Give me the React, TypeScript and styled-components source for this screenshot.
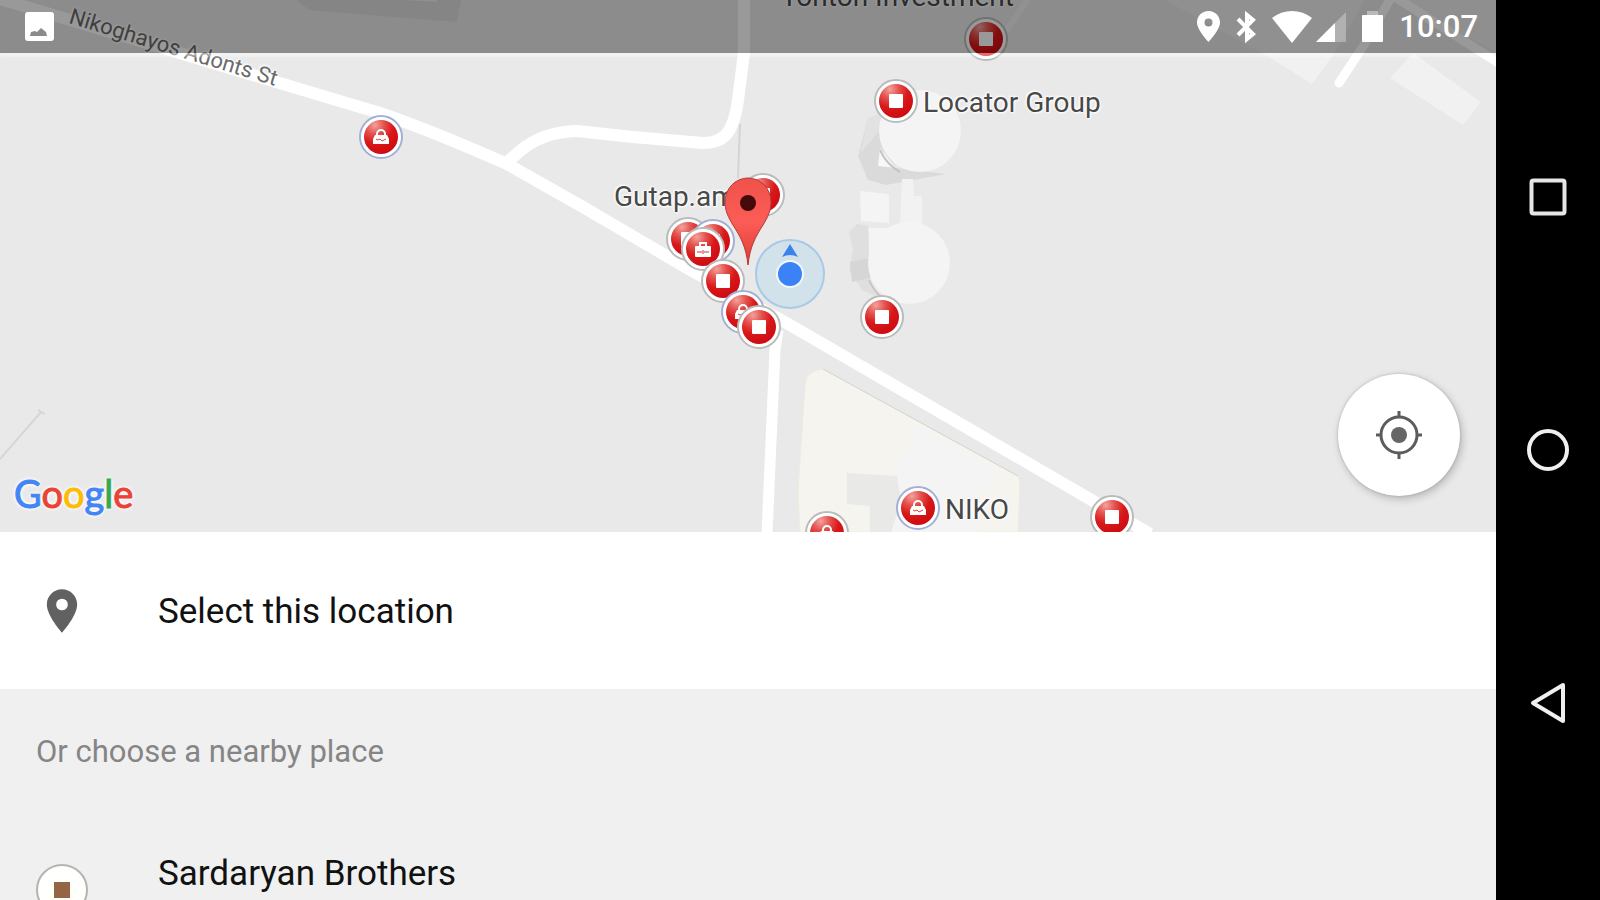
import React from 'react';
import styled, { createGlobalStyle } from 'styled-components';

const GlobalStyle = createGlobalStyle`
  *, *::before, *::after { box-sizing: border-box; }
  body { margin: 0; background: #000; font-family: Roboto, "Liberation Sans", sans-serif; }
  button { font: inherit; color: inherit; background: none; border: 0; padding: 0; cursor: pointer; }
  svg { display: block; }
`;

const Device = styled.div`
  display: flex;
  height: 100vh;
  overflow: hidden;
  background: #000;
`;

const Screen = styled.main`
  position: relative;
  flex: 1;
  min-width: 0;
  display: flex;
  flex-direction: column;
  background: #f0f0f0;
  overflow: hidden;
`;

const NavBar = styled.nav`
  flex: none;
  width: 104px;
  display: flex;
  flex-direction: column;
  align-items: stretch;
  justify-content: center;
`;

const NavButton = styled.button`
  flex: 0 1 253px;
  display: flex;
  align-items: center;
  justify-content: center;
`;

const StatusBar = styled.header`
  position: absolute;
  inset: 0 0 auto 0;
  height: 53px;
  padding: 0 18px 0 25px;
  display: flex;
  align-items: center;
  justify-content: space-between;
  background: rgba(0, 0, 0, 0.4);
  box-shadow: 0 4px 2px rgba(255, 255, 255, 0.4);
  color: #fff;
`;

const StatusGroup = styled.div<{ $gap: number }>`
  display: flex;
  align-items: center;
  gap: ${(p) => p.$gap}px;
`;

const Clock = styled.time`
  font-size: 31px;
  line-height: 36px;
  font-weight: 500;
`;

const MapArea = styled.section`
  position: relative;
  flex: none;
  height: 532px;
  overflow: hidden;
  background: #e9e9e9;
`;

const Terrain = styled.svg`
  position: absolute;
  left: 0;
  top: 0;
`;

const MapLabel = styled.span<{ $x: number; $y: number; $rotate?: number; $size?: number }>`
  position: absolute;
  left: ${(p) => p.$x}px;
  top: ${(p) => p.$y}px;
  font-size: ${(p) => p.$size ?? 28}px;
  line-height: 36px;
  white-space: nowrap;
  color: ${(p) => (p.$rotate ? '#6a6a6a' : '#484848')};
  text-shadow: 0 0 2px #fff, 0 0 3px #fff, 1px 1px 2px #fff, -1px -1px 2px #fff;
  transform-origin: 0 50%;
  transform: rotate(${(p) => p.$rotate ?? 0}deg);
`;

const Pin = styled.svg<{ $x: number; $y: number }>`
  position: absolute;
  left: ${(p) => p.$x}px;
  top: ${(p) => p.$y}px;
  transform: translate(-50%, -50%);
`;

const Wordmark = styled.span`
  position: absolute;
  left: 14px;
  bottom: 15px;
  font-family: Lato, Roboto, sans-serif;
  font-size: 38px;
  line-height: 48px;
  text-shadow: 0 0 3px #fff, 0 0 4px #fff, 0 0 5px #fff;
`;

const Letter = styled.span<{ $color: string }>`
  color: ${(p) => p.$color};
  -webkit-text-stroke: 1px ${(p) => p.$color};
`;

const LocateButton = styled.button`
  position: absolute;
  right: 36px;
  bottom: 36px;
  width: 122px;
  height: 122px;
  border-radius: 50%;
  display: flex;
  align-items: center;
  justify-content: center;
  background: #fff;
  box-shadow: 2px 3px 8px rgba(0, 0, 0, 0.22), 0 0 3px rgba(0, 0, 0, 0.18);
`;

const SelectRow = styled.button`
  flex: none;
  height: 157px;
  padding: 0 36px;
  display: flex;
  align-items: center;
  gap: 70px;
  text-align: left;
  background: #fff;
`;

const RowText = styled.span`
  padding-top: 2px;
  font-size: 35px;
  line-height: 44px;
  color: #111;
`;

const Nearby = styled.section`
  flex: none;
`;

const NearbyTitle = styled.h2`
  margin: 0;
  padding: 0 36px;
  font-size: 31px;
  font-weight: 400;
  line-height: 126px;
  color: #858585;
`;

const PlaceRow = styled.button`
  width: 100%;
  height: 153px;
  padding: 35px 36px 0;
  display: flex;
  align-items: flex-start;
  gap: 70px;
  text-align: left;
`;

const PlaceBadge = styled.span`
  flex: none;
  width: 52px;
  height: 52px;
  margin-top: 14px;
  border: 2px solid #b4b4b0;
  border-radius: 50%;
  display: flex;
  align-items: center;
  justify-content: center;
  background: #fffffd;

  &::before {
    content: '';
    width: 16px;
    height: 16px;
    background: #946545;
  }
`;

type Kind = 'square' | 'bag' | 'case';
interface PoiData { x: number; y: number; kind: Kind; blue?: boolean }

const POIS: PoiData[] = [
  { x: 381, y: 137, kind: 'bag', blue: true },
  { x: 986, y: 39, kind: 'square' },
  { x: 896, y: 101, kind: 'square' },
  { x: 763, y: 195, kind: 'square' },
  { x: 688, y: 239, kind: 'square' },
  { x: 713, y: 241, kind: 'square', blue: true },
  { x: 703, y: 249, kind: 'case' },
  { x: 723, y: 281, kind: 'square' },
  { x: 743, y: 312, kind: 'bag', blue: true },
  { x: 759, y: 327, kind: 'square' },
  { x: 882, y: 317, kind: 'square' },
  { x: 918, y: 508, kind: 'bag', blue: true },
  { x: 827, y: 533, kind: 'bag' },
  { x: 1112, y: 517, kind: 'square' },
];

function Poi({ x, y, kind, blue }: PoiData) {
  return (
    <Pin $x={x} $y={y} width="46" height="46" viewBox="-23 -23 46 46" aria-hidden="true">
      <circle r="21" fill="#fff" stroke={blue ? '#a3b0d6' : '#b9bcba'} strokeWidth="2" />
      <circle r="17" fill="url(#poiRed)" />
      {kind === 'square' && <rect x="-7" y="-7" width="14" height="14" rx="1" fill="#fff" />}
      {kind === 'bag' && (
        <g>
          <path d="M-4-1v-2a4 4 0 0 1 8 0v2" fill="none" stroke="#fff" strokeWidth="2" />
          <path d="M-6-2H6l2 4v5H-8V2z" fill="#fff" />
          <path d="M-5 2l2 1 2-1 2 2 4-2" fill="none" stroke="#e0413e" strokeWidth="1" />
        </g>
      )}
      {kind === 'case' && (
        <g>
          <path d="M-3-3v-3h6v3" fill="none" stroke="#fff" strokeWidth="2" />
          <rect x="-8" y="-3" width="16" height="11" rx="1" fill="#fff" />
          <path d="M-6 3H-1M1 3H6M0 1v4" stroke="#dc2c2b" strokeWidth="1" />
        </g>
      )}
    </Pin>
  );
}

function MapDrawing() {
  return (
    <Terrain width="1600" height="532" viewBox="0 0 1600 532" aria-hidden="true">
      <defs>
        <radialGradient id="poiRed" cx="0.32" cy="0.15" r="0.9">
          <stop offset="0" stopColor="#f3a29d" />
          <stop offset="0.3" stopColor="#e4524e" />
          <stop offset="0.6" stopColor="#d8181a" />
          <stop offset="1" stopColor="#cd0a10" />
        </radialGradient>
      </defs>

      <path d="M297 0l12 10 148 12 4-22z" fill="#dedede" />
      <path d="M405 0h32v2z" fill="#efefef" />
      <path d="M1165 0h200l-32 55-21 29-48-30z" fill="#f1f1f1" />
      <path d="M1413 53l68 49-18 23-73-47z" fill="#f1f1f1" />
      <path d="M1400 0h96v52z" fill="#efefef" />

      <path d="M805 385q1-15 18-16l195 107 2 6-2 50H800l-2-42z" fill="#f5f4ef" stroke="#eeecdf" strokeWidth="1" />
      <path d="M823 369l195 107" stroke="#d2d2d0" strokeWidth="1" />
      <path d="M915 425l79 42-2 20-14 3v42h-88v-14l10-40-7-10 17-25z" fill="#f4f4f5" />
      <path d="M847 473l50 3 4 26-10 30h-21v-26l-23-2z" fill="#e9e9e8" />

      <path d="M868 118l12-4 2 28 14 26 50 6-60 11-18-5-10-24z" fill="#dadada" />
      <path d="M868 118l12-4v16l-20 24z" fill="#e2e2e2" />
      <path d="M880 148l16 20-18-2z" fill="#f7f7f7" />
      <path d="M880 150q6 14 20 22" fill="none" stroke="#c4c4c4" strokeWidth="2" />
      <path d="M868 226l2 60 10 12-18-8-13-20 4-20-4-18 8-8z" fill="#dfdfdf" />
      <path d="M850 262l20-4v20l-18 4z" fill="#d6d6d6" />
      <path d="M869 280q5 12 14 18" fill="none" stroke="#c6c6c6" strokeWidth="2" />
      <circle cx="920" cy="131" r="41" fill="#f4f4f4" />
      <path d="M860 191l29 3v29l-28-2z" fill="#f4f4f4" />
      <path d="M902 179h11l1 17h8v30h-22z" fill="#f2f2f2" />
      <circle cx="909" cy="263" r="41" fill="#f4f4f4" />
      <path d="M869 228h34v30h-34z" fill="#f4f4f4" />

      <path d="M740 124l-2 54" stroke="#d4d4d0" strokeWidth="2" />
      <path d="M0 459L41 412M38 410l7 4" stroke="#d6d6d6" strokeWidth="2" fill="none" />

      <g fill="none" stroke="#fff" strokeLinejoin="round">
        <path d="M-10-4L90 26L283 84L333 99L380 113Q430 130 507 164L583 207L687 268L790 325L983 437L1150 534" strokeWidth="12" />
        <path d="M505 164L520 151Q542 132 577 131L633 137L703 143Q724 143 731 127Q736 116 738 100L744 53V0" strokeWidth="12" />
        <path d="M778 330L775 350L767 534" strokeWidth="11" />
        <path d="M1339 83L1364 45L1392-4" strokeWidth="9" strokeLinecap="round" />
        <path d="M1384-10L1500 64" strokeWidth="9" />
        <path d="M1030-4L1004 34" strokeWidth="6" stroke="#f2f2f2" />
      </g>
    </Terrain>
  );
}

export default function App() {
  return (
    <>
      <GlobalStyle />
      <Device>
        <Screen>
          <MapArea aria-label="Map">
            <MapDrawing />
            <MapLabel $x={70} $y={-2} $rotate={17} $size={22}>Nikoghayos Adonts St</MapLabel>
            <MapLabel $x={781} $y={-21}>Tonton Investment</MapLabel>
            <MapLabel $x={923} $y={85}>Locator Group</MapLabel>
            <MapLabel $x={614} $y={179}>Gutap.am</MapLabel>
            <MapLabel $x={945} $y={492}>NIKO</MapLabel>
            {POIS.map((poi) => (
              <Poi key={`${poi.x}-${poi.y}`} {...poi} />
            ))}
            <Pin $x={790} $y={274} width="74" height="74" viewBox="-37 -37 74 74" aria-hidden="true">
              <circle r="34" fill="#bcdcec" fillOpacity="0.5" stroke="#a9c9e6" strokeWidth="2" />
              <path d="M0-30L8-17Q0-21-8-17z" fill="#3b82f0" />
              <circle r="14" fill="#f2f6fa" />
              <circle r="12" fill="#3b82f6" />
            </Pin>
            <Pin $x={748} $y={222} width="50" height="90" viewBox="-25 -45 50 90" aria-hidden="true">
              <defs>
                <linearGradient id="dropRed" x1="0" y1="0" x2="0" y2="1">
                  <stop offset="0" stopColor="#f0524b" />
                  <stop offset="0.5" stopColor="#fb5d56" />
                  <stop offset="1" stopColor="#e03a34" />
                </linearGradient>
              </defs>
              <path
                d="M0 43C-2 24-8 14-15 3C-20-5-23-12-23-20A23 24 0 0 1 23-20C23-12 20-5 15 3C8 14 2 24 0 43z"
                fill="url(#dropRed)"
                stroke="#b23a36"
                strokeWidth="1"
              />
              <circle cy="-19" r="8" fill="#450b0b" />
            </Pin>
            <Wordmark aria-label="Google">
              <Letter $color="#4285f4">G</Letter>
              <Letter $color="#ea4335">o</Letter>
              <Letter $color="#fbbc05">o</Letter>
              <Letter $color="#4285f4">g</Letter>
              <Letter $color="#34a853">l</Letter>
              <Letter $color="#ea4335">e</Letter>
            </Wordmark>
            <LocateButton aria-label="My location">
              <svg width="48" height="48" viewBox="-24 -24 48 48">
                <circle r="18" fill="none" stroke="#5c5c5c" strokeWidth="3" />
                <circle r="8" fill="#666" />
                <path d="M0-24v6M0 18v6M-23 0h5M18 0h5" stroke="#5c5c5c" strokeWidth="3" />
              </svg>
            </LocateButton>
          </MapArea>

          <SelectRow>
            <svg width="52" height="52" viewBox="0 0 24 24" fill="#616161" aria-hidden="true">
              <path d="M12 2C8.130 2 5 5.130 5 9c0 5.250 7 13 7 13s7-7.750 7-13c0-3.870-3.130-7-7-7zm0 9.700a2.700 2.700 0 1 1 0-5.400 2.700 2.700 0 0 1 0 5.400z" />
            </svg>
            <RowText>Select this location</RowText>
          </SelectRow>

          <Nearby>
            <NearbyTitle>Or choose a nearby place</NearbyTitle>
            <PlaceRow>
              <PlaceBadge />
              <RowText>Sardaryan Brothers</RowText>
            </PlaceRow>
          </Nearby>

          <StatusBar>
            <svg width="29" height="29" viewBox="0 0 29 29" aria-hidden="true">
              <rect width="29" height="29" rx="3" fill="#fff" />
              <path d="M5 24l1-4 4-1 2 1 4-4 5 4 1 4z" fill="#8b8b8b" />
            </svg>
            <StatusGroup $gap={16}>
              <svg width="23" height="31" viewBox="0 0 23 31" aria-hidden="true">
                <path
                  fill="#fff"
                  fillRule="evenodd"
                  d="M11.500 0C5 0 0 5 0 11.500C0 19 11.500 31 11.500 31S23 19 23 11.500C23 5 18 0 11.500 0zm0 7.500a4 4 0 1 1 0 8 4 4 0 0 1 0-8z"
                />
              </svg>
              <svg width="20" height="32" viewBox="0 0 20 32" fill="none" stroke="#fff" strokeWidth="4" aria-hidden="true">
                <path d="M2 8l15 15-6 5V4l6 5L2 24" />
              </svg>
              <StatusGroup $gap={4}>
                <svg width="40" height="32" viewBox="0 0 40 32" aria-hidden="true">
                  <path d="M0 7Q9 0 20 0T40 7L20 32z" fill="#fff" />
                </svg>
                <svg width="30" height="30" viewBox="0 0 30 30" aria-hidden="true">
                  <path d="M30 0v30H0z" fill="#fff" fillOpacity="0.3" />
                  <path d="M19 11v19H0z" fill="#fff" />
                </svg>
              </StatusGroup>
              <svg width="21" height="31" viewBox="0 0 21 31" aria-hidden="true">
                <path d="M5 0h11v4H5z" fill="#fff" fillOpacity="0.4" />
                <rect y="4" width="21" height="27" rx="1" fill="#fff" />
              </svg>
              <Clock>10:07</Clock>
            </StatusGroup>
          </StatusBar>
        </Screen>

        <NavBar aria-label="System navigation">
          <NavButton aria-label="Overview">
            <svg width="38" height="38" viewBox="0 0 38 38">
              <rect x="2.500" y="2.500" width="33" height="33" rx="2" fill="none" stroke="#e6e6e6" strokeWidth="4" />
            </svg>
          </NavButton>
          <NavButton aria-label="Home">
            <svg width="42" height="42" viewBox="0 0 42 42">
              <circle cx="21" cy="21" r="19" fill="none" stroke="#f0f0f0" strokeWidth="4" />
            </svg>
          </NavButton>
          <NavButton aria-label="Back">
            <svg width="38" height="44" viewBox="0 0 38 44">
              <path d="M4 22L34 4v36z" fill="none" stroke="#f0f0f0" strokeWidth="4" strokeLinejoin="round" />
            </svg>
          </NavButton>
        </NavBar>
      </Device>
    </>
  );
}
